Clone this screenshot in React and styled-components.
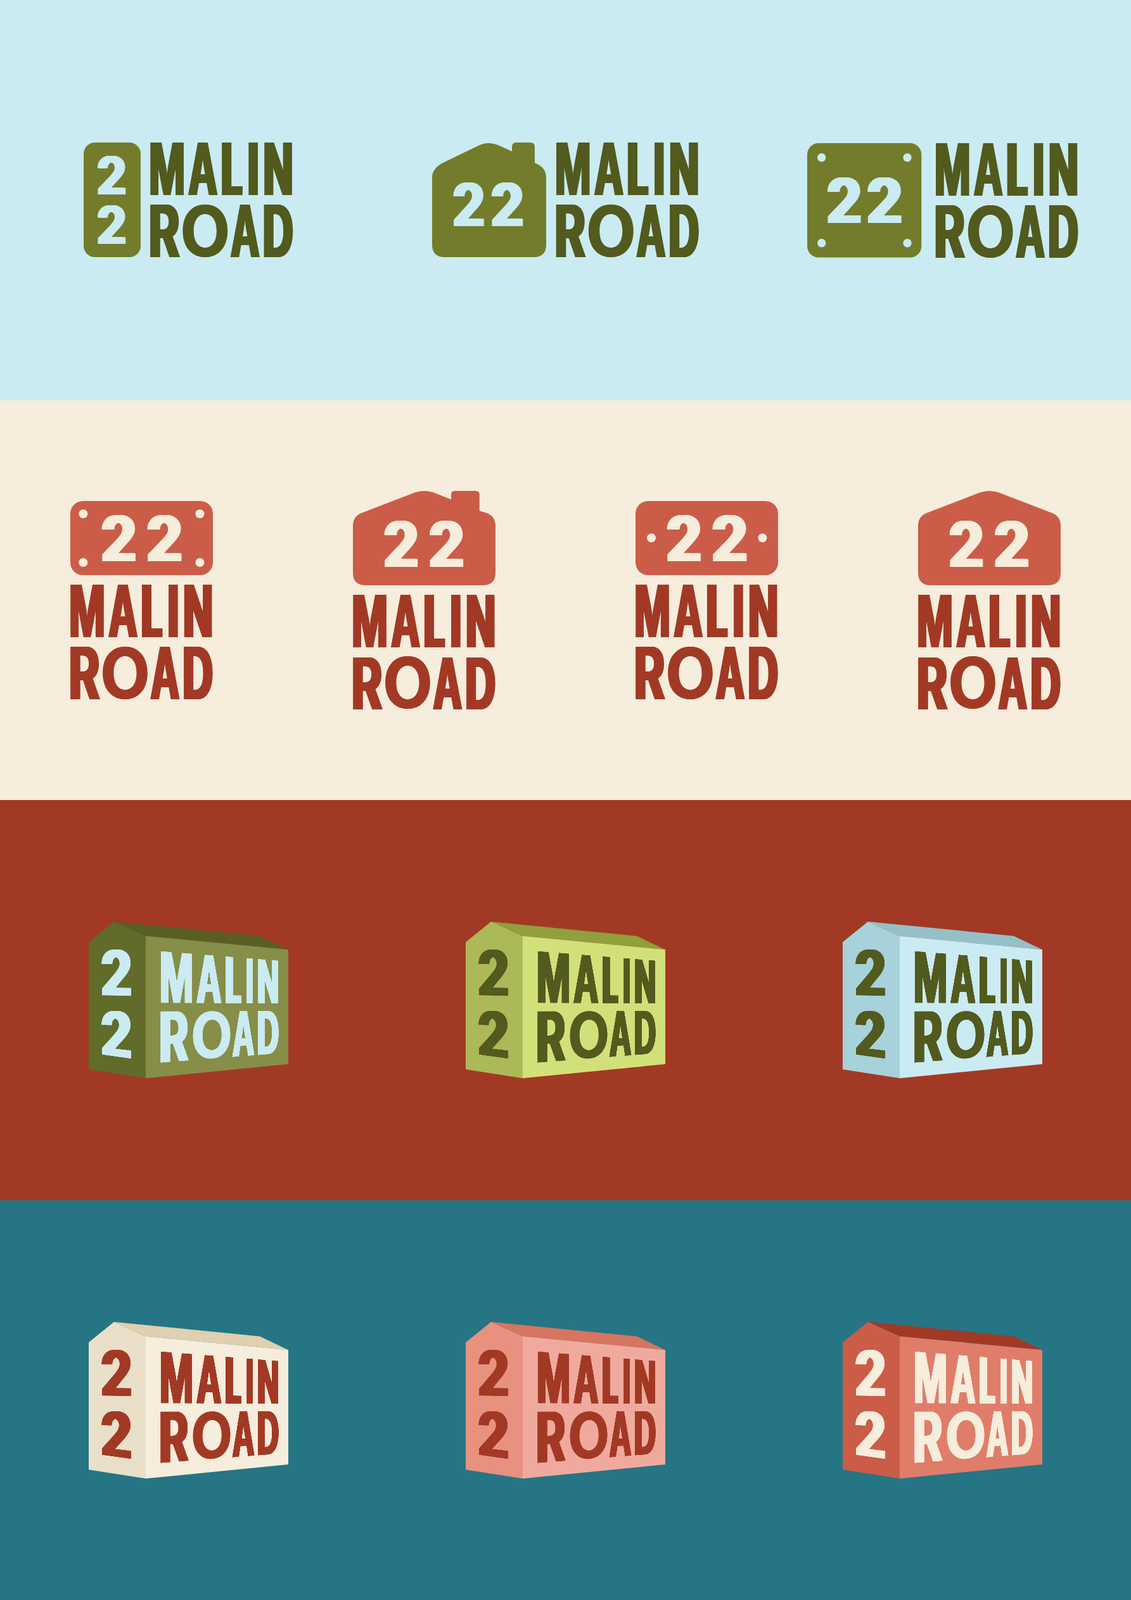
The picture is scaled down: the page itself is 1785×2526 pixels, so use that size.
import React from "react";
import styled, { createGlobalStyle } from "styled-components";

const FONT_SIZE = 200;
const LINE = 150;
const FONT_STACK = '"Inter", "Liberation Sans", sans-serif';
const FONT_WEIGHT = 700;

/* how far each glyph is thickened sideways (px at FONT_SIZE) so stems stay even once it is condensed */
const WIDEN = { M: 7, A: 7, L: 12, I: 6, N: 8, R: 6, O: 3, D: 8, 2: 8 };

const GlobalStyle = createGlobalStyle`
  html, body { margin: 0; padding: 0; }
  body { background: #caebf2; font-family: ${FONT_STACK}; }
`;

const Page = styled.main`
  width: 1785px;
  height: 2526px;
  display: grid;
  grid-template-rows: repeat(4, 1fr);
  overflow: hidden;
`;
const Band = styled.section`
  background: ${(p) => p.$bg};
  display: grid;
  grid-template-columns: repeat(${(p) => p.$cols}, 1fr);
  place-items: center;
`;
const LogoFrame = styled.div`
  position: relative;
  width: ${(p) => p.$w}px;
  height: ${(p) => p.$h}px;
`;
const Drawing = styled.svg`
  display: block;
  overflow: visible;
`;
const widenShadow = (d, color) => {
  const out = [];
  for (let i = 2; i <= d; i += 2) out.push(`${i}px 0 0 ${color}`, `-${i}px 0 0 ${color}`);
  return out.length ? out.join(",") : "none";
};
const GlyphSpan = styled.span`
  position: absolute;
  left: 0;
  top: 0;
  transform-origin: 0 0;
  font-family: ${FONT_STACK};
  font-weight: ${FONT_WEIGHT};
  font-size: ${FONT_SIZE}px;
  line-height: ${LINE}px;
  white-space: pre;
  color: ${(p) => p.$color};
  text-shadow: ${(p) => widenShadow(p.$widen, p.$color)};
`;

/* measurement of a glyph's ink box, used to fit each letter to its place */
const cache = {};
let ctx = null;
function ink(ch) {
  if (cache[ch]) return cache[ch];
  if (!ctx) ctx = document.createElement("canvas").getContext("2d");
  ctx.font = `${FONT_WEIGHT} ${FONT_SIZE}px ${FONT_STACK}`;
  const m = ctx.measureText(ch);
  const baseline =
    (LINE - (m.fontBoundingBoxAscent + m.fontBoundingBoxDescent)) / 2 + m.fontBoundingBoxAscent;
  const d = WIDEN[ch] || 0;
  const r = {
    x: -m.actualBoundingBoxLeft - d,
    y: baseline - m.actualBoundingBoxAscent,
    w: m.actualBoundingBoxLeft + m.actualBoundingBoxRight + 2 * d,
    h: m.actualBoundingBoxAscent + m.actualBoundingBoxDescent,
  };
  cache[ch] = r;
  return r;
}

/* homography from a glyph's ink box to a quad [TL, TR, BR, BL] */
function quadTransform(ch, q) {
  const b = ink(ch);
  const [[x0, y0], [x1, y1], [x2, y2], [x3, y3]] = q;
  const sx = x0 - x1 + x2 - x3;
  const sy = y0 - y1 + y2 - y3;
  const dx1 = x1 - x2, dx2 = x3 - x2, dy1 = y1 - y2, dy2 = y3 - y2;
  const den = dx1 * dy2 - dx2 * dy1;
  const g = (sx * dy2 - dx2 * sy) / den;
  const h = (dx1 * sy - sx * dy1) / den;
  const a = x1 - x0 + g * x1, bb = x3 - x0 + h * x3, c = x0;
  const d = y1 - y0 + g * y1, e = y3 - y0 + h * y3, f = y0;
  const m11 = a / b.w, m12 = d / b.w, m14 = g / b.w;
  const m21 = bb / b.h, m22 = e / b.h, m24 = h / b.h;
  const m41 = c - m11 * b.x - m21 * b.y;
  const m42 = f - m12 * b.x - m22 * b.y;
  const m44 = 1 - m14 * b.x - m24 * b.y;
  if (Math.abs(g) < 1e-9 && Math.abs(h) < 1e-9) return `matrix(${m11},${m12},${m21},${m22},${m41},${m42})`;
  return `matrix3d(${m11},${m12},0,${m14},${m21},${m22},0,${m24},0,0,1,0,${m41},${m42},0,${m44})`;
}
const rectQuad = (x0, y0, x1, y1) => [[x0, y0], [x1, y0], [x1, y1], [x0, y1]];

function Glyph({ ch, quad, color }) {
  return (
    <GlyphSpan $color={color} $widen={WIDEN[ch] || 0} style={{ transform: quadTransform(ch, quad) }}>
      {ch}
    </GlyphSpan>
  );
}

const WORD_TOP = [["M", 0, 0.237], ["A", 0.264, 0.474], ["L", 0.502, 0.647], ["I", 0.689, 0.754], ["N", 0.799, 0.994]];
const WORD_BOTTOM = [["R", 0, 0.21], ["O", 0.225, 0.544], ["A", 0.559, 0.769], ["D", 0.796, 1]];

function Word({ x, y, w = 225.5, h = 181, color }) {
  return (
    <>
      {WORD_TOP.map(([c, a, b]) => (
        <Glyph key={"t" + c} ch={c} color={color} quad={rectQuad(x + a * w, y, x + b * w, y + 0.461 * h)} />
      ))}
      {WORD_BOTTOM.map(([c, a, b]) => (
        <Glyph key={"b" + c} ch={c} color={color} quad={rectQuad(x + a * w, y + 0.541 * h, x + b * w, y + h)} />
      ))}
    </>
  );
}

const Digit = ({ box, color }) => <Glyph ch="2" color={color} quad={rectQuad(box[0], box[2], box[1], box[3])} />;

const roofBase =
  "M0,55 Q0,41 12.8,35.3 L97.7,2.6 Q112.5,-2.6 127.3,2.6";
const houseChimney = `${roofBase} L155,13.6 L155,6 Q155,0 161,0 L193.7,0 Q199.7,0 199.7,6 L199.7,31.3 L212.2,35.3 Q225,41 225,55 L225,129 Q225,149 205,149 L20,149 Q0,149 0,129 Z`;
const housePlain = `${roofBase} L212.2,35.3 Q225,41 225,55 L225,129 Q225,149 205,149 L20,149 Q0,149 0,129 Z`;
const houseWide =
  "M0,55 Q0,42 15,33 L75,4 Q89,-2 104,4 L126,14 L126,7 Q126,0 133,0 L155,0 Q162,0 162,7 L162,32 L168,35 Q180,42 180,55 L180,161 Q180,181 160,181 L20,181 Q0,181 0,161 Z";

function Plate({ w, h, r, fill, holes = [], holeFill, holeR = 7 }) {
  return (
    <Drawing width={w} height={h} viewBox={`0 0 ${w} ${h}`}>
      <rect width={w} height={h} rx={r} fill={fill} />
      {holes.map(([cx, cy]) => (
        <circle key={cx + "-" + cy} cx={cx} cy={cy} r={holeR} fill={holeFill} />
      ))}
    </Drawing>
  );
}
function House({ w, h, d, fill }) {
  return (
    <Drawing width={w} height={h} viewBox={`0 0 ${w} ${h}`}>
      <path d={d} fill={fill} />
    </Drawing>
  );
}

const OLIVE = "#737c2b";
const DARK = "#535a1e";
const SKY = "#caebf2";
const CREAM = "#f6eddc";
const RUST = "#a23925";
const CORAL = "#cb5c48";

function HorizontalBadge() {
  return (
    <LogoFrame $w={330.5} $h={181}>
      <Plate w={90} h={181} r={18} fill={OLIVE} />
      <Digit box={[21.6, 66.6, 21, 82]} color={SKY} />
      <Digit box={[21.6, 66.6, 99, 160]} color={SKY} />
      <Word x={105} y={0} color={DARK} />
    </LogoFrame>
  );
}
function HorizontalHouse() {
  return (
    <LogoFrame $w={421.6} $h={181}>
      <House w={180} h={181} d={houseWide} fill={OLIVE} />
      <Digit box={[33.2, 82.2, 63, 132]} color={SKY} />
      <Digit box={[93.6, 143.6, 63, 132]} color={SKY} />
      <Word x={195.6} y={0} color={DARK} />
    </LogoFrame>
  );
}
function HorizontalPlate() {
  return (
    <LogoFrame $w={427.7} $h={180.5}>
      <Plate
        w={180.3}
        h={180.5}
        r={18}
        fill={OLIVE}
        holeFill={SKY}
        holeR={6.7}
        holes={[[22.7, 22.7], [158, 22.7], [22.7, 157.7], [158, 157.7]]}
      />
      <Digit box={[31.7, 85, 54.3, 126]} color={SKY} />
      <Digit box={[95, 149, 54.3, 126]} color={SKY} />
      <Word x={202.7} y={0} w={225} color={DARK} />
    </LogoFrame>
  );
}
function StackedPlate({ corners }) {
  const holes = corners
    ? [[20.3, 20.3], [204.4, 20.3], [20.3, 97], [204.4, 97]]
    : [[25, 58.3], [200.4, 58.3]];
  return (
    <LogoFrame $w={225} $h={313}>
      <Plate w={225} h={117} r={20} fill={CORAL} holeFill={CREAM} holes={holes} />
      <Digit box={[49.5, 103.2, 22, 95]} color={CREAM} />
      <Digit box={[121.2, 175.6, 22, 95]} color={CREAM} />
      <Word x={0} y={132} w={225} color={RUST} />
    </LogoFrame>
  );
}
function StackedHouse({ chimney }) {
  return (
    <LogoFrame $w={225} $h={344.6}>
      <House w={225} h={149} d={chimney ? houseChimney : housePlain} fill={CORAL} />
      <Digit box={[49.3, 102.5, 47.3, 120.3]} color={CREAM} />
      <Digit box={[120.7, 174.7, 47.3, 120.3]} color={CREAM} />
      <Word x={0} y={164.4} w={225} h={180.2} color={RUST} />
    </LogoFrame>
  );
}

/* isometric building: coordinates in 3× pixels, origin at the ridge box */
const OX = 60, OY = 75, K = 3;
const L = ([x, y]) => [(x - OX) / K, (y - OY) / K];
const ISO_TOP = [["M", 400, 551], ["A", 568, 690], ["L", 708, 783], ["I", 808, 838], ["N", 862, 958]];
const ISO_BOTTOM = [["R", 400, 535], ["O", 552, 732], ["A", 738, 846], ["D", 860, 960]];
const t1 = (x) => 215 + (x - 400) * 0.0806;
const b1 = (x) => 460 + (x - 400) * 0.004;
const t2 = (x) => 500 - (x - 400) * 0.004;
const b2 = (x) => 743 - (x - 400) * 0.0786;

const Face = styled.polygon`
  fill: ${(p) => p.$fill};
`;

function Building({ left, roof, front, text }) {
  return (
    <LogoFrame $w={315} $h={247.33}>
      <Drawing width={315} height={247.33} viewBox="60 75 945 742">
        <Face $fill={roof} points="180,75 870,143 1005,208 330,143" />
        <Face $fill={left} points="60,172 180,75 330,143 330,817 60,775" />
        <Face $fill={front} points="330,143 1005,208 1005,750 330,817" />
      </Drawing>
      <Glyph ch="2" color={text} quad={[[120, 207], [262, 207], [262, 426], [120, 424]].map(L)} />
      <Glyph ch="2" color={text} quad={[[120, 498], [262, 498], [262, 724], [120, 704]].map(L)} />
      {ISO_TOP.map(([c, a, b]) => (
        <Glyph key={"t" + c} ch={c} color={text} quad={[[a, t1(a)], [b, t1(b)], [b, b1(b)], [a, b1(a)]].map(L)} />
      ))}
      {ISO_BOTTOM.map(([c, a, b]) => (
        <Glyph key={"b" + c} ch={c} color={text} quad={[[a, t2(a)], [b, t2(b)], [b, b2(b)], [a, b2(a)]].map(L)} />
      ))}
    </LogoFrame>
  );
}

export default function App() {
  return (
    <>
      <GlobalStyle />
      <Page>
        <Band $bg={SKY} $cols={3}>
          <HorizontalBadge />
          <HorizontalHouse />
          <HorizontalPlate />
        </Band>
        <Band $bg={CREAM} $cols={4}>
          <StackedPlate corners />
          <StackedHouse chimney />
          <StackedPlate />
          <StackedHouse />
        </Band>
        <Band $bg={RUST} $cols={3}>
          <Building left="#616b2a" roof="#595f24" front="#868e47" text={SKY} />
          <Building left="#acb958" roof="#919f3c" front="#d2e079" text={DARK} />
          <Building left="#a7d2db" roof="#96c0c8" front={SKY} text={DARK} />
        </Band>
        <Band $bg="#257585" $cols={3}>
          <Building left="#eadfc9" roof="#e0cfb0" front={CREAM} text={RUST} />
          <Building left="#e8917f" roof="#d67561" front="#f0aa9d" text={RUST} />
          <Building left={CORAL} roof={RUST} front="#e07d6a" text={CREAM} />
        </Band>
      </Page>
    </>
  );
}
